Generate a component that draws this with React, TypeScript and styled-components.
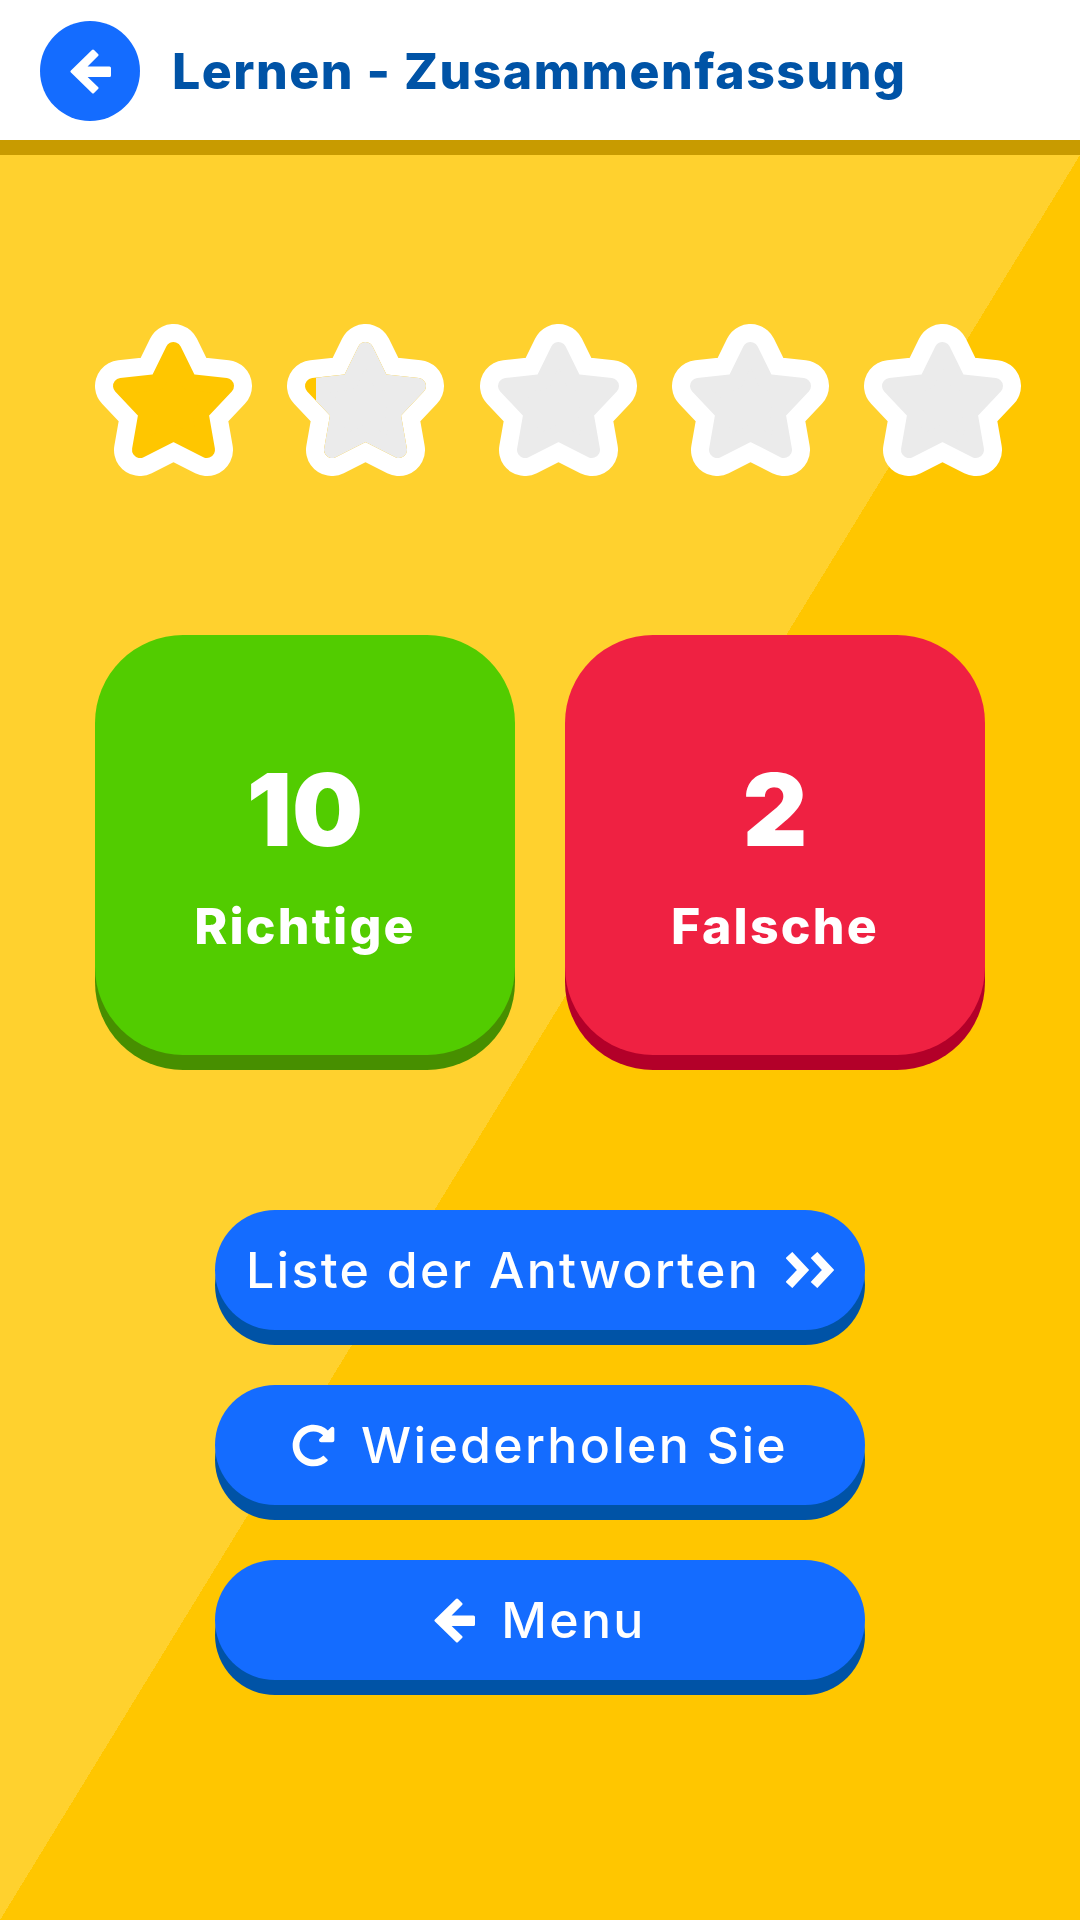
import { createGlobalStyle, styled } from 'styled-components';
import { FaRedoAlt } from 'react-icons/fa';

const GlobalStyle = createGlobalStyle`
  html, body {
    margin: 0;
    padding: 0;
  }

  * {
    box-sizing: border-box;
  }
`;

const Page = styled.div`
  width: 1080px;
  height: 1920px;
  display: flex;
  flex-direction: column;
  overflow: hidden;
  font-family: Inter, "Liberation Sans", sans-serif;
  color: white;
`;

const Header = styled.header`
  height: 155px;
  flex: none;
  display: flex;
  align-items: flex-start;
  gap: 32px;
  padding: 21px 0 0 40px;
  background: white;
  border-bottom: 15px solid #c89b00;
`;

const BackButton = styled.button`
  width: 100px;
  height: 100px;
  flex: none;
  display: flex;
  align-items: center;
  justify-content: center;
  padding: 0;
  border: none;
  border-radius: 50%;
  background: #146cff;
  color: white;
`;

const Title = styled.h1`
  margin: 0;
  line-height: 100px;
  font-size: 50px;
  font-weight: 800;
  letter-spacing: 1.5px;
  color: #0053a6;
  white-space: nowrap;
`;

const Main = styled.main`
  flex: 1;
  display: flex;
  flex-direction: column;
  padding-top: 169px;
  background: linear-gradient(to top left, #ffc600 50%, #ffd12e 50%);
`;

const Stars = styled.div`
  width: 926px;
  margin-left: 95px;
  display: flex;
  justify-content: space-between;
`;

const Cards = styled.section`
  margin-top: 159px;
  padding: 0 95px;
  display: flex;
  gap: 50px;
`;

const Card = styled.div<{ $bg: string; $edge: string }>`
  width: 420px;
  height: 420px;
  display: flex;
  flex-direction: column;
  align-items: center;
  padding-top: 115px;
  border-radius: 88px;
  background: ${(p) => p.$bg};
  box-shadow: 0 15px 0 ${(p) => p.$edge};
`;

const Count = styled.div`
  font-size: 100px;
  line-height: 120px;
  font-weight: 900;
`;

const CardLabel = styled.div`
  margin-top: 26px;
  font-size: 50px;
  line-height: 60px;
  font-weight: 800;
  letter-spacing: 2.2px;
`;

const Actions = styled.nav`
  margin-top: 155px;
  display: flex;
  flex-direction: column;
  align-items: center;
  gap: 55px;
`;

const ActionButton = styled.button`
  width: 650px;
  height: 120px;
  display: flex;
  align-items: center;
  justify-content: center;
  gap: 26px;
  padding: 0;
  border: none;
  border-radius: 60px;
  background: #146cff;
  box-shadow: 0 15px 0 #0053a6;
  color: white;
  font-family: inherit;
  font-size: 50px;
  font-weight: 500;
  letter-spacing: 2.3px;

  svg {
    flex: none;
  }
`;

const ArrowLeft = () => (
  <svg width="41" height="45" viewBox="0 0 41 45">
    <polygon
      points="2,22.5 23,2 27,6 14,19 39.5,19 39.5,26.5 14,26.5 27,39 23,43"
      fill="white"
      stroke="white"
      strokeWidth="3"
      strokeLinejoin="round"
    />
  </svg>
);

const DoubleChevron = () => (
  <svg width="48" height="36" viewBox="0 0 48 36" fill="none" stroke="white" strokeWidth="9">
    <polyline points="3,3 17,18 3,33" />
    <polyline points="28,3 42,18 28,33" />
  </svg>
);

const Star = ({ fill, gray }: { fill: string; gray?: boolean }) => {
  const points = '78.5,26 62.8,58 26,62 51.5,89 45,126 78.5,109 112,126 105.5,89 131,62 94.2,58';
  return (
    <svg width="157" height="152" viewBox="0 0 157 152">
      <polygon points={points} fill="white" stroke="white" strokeWidth="52" strokeLinejoin="round" />
      <polygon points={points} fill={fill} stroke={fill} strokeWidth="16" strokeLinejoin="round" />
      {gray && (
        <>
          <defs>
            <clipPath id="star-cut">
              <rect x="29" y="0" width="128" height="152" />
            </clipPath>
          </defs>
          <polygon
            points={points}
            fill="#ebebeb"
            stroke="#ebebeb"
            strokeWidth="16"
            strokeLinejoin="round"
            clipPath="url(#star-cut)"
          />
        </>
      )}
    </svg>
  );
};

export default function App() {
  return (
    <Page>
      <GlobalStyle />
      <Header>
        <BackButton>
          <ArrowLeft />
        </BackButton>
        <Title>Lernen - Zusammenfassung</Title>
      </Header>
      <Main>
        <Stars>
          <Star fill="#ffc600" />
          <Star fill="#ffc600" gray />
          <Star fill="#ebebeb" />
          <Star fill="#ebebeb" />
          <Star fill="#ebebeb" />
        </Stars>
        <Cards>
          <Card $bg="#52cc00" $edge="#478f00">
            <Count>10</Count>
            <CardLabel>Richtige</CardLabel>
          </Card>
          <Card $bg="#ef2142" $edge="#b30029">
            <Count>2</Count>
            <CardLabel>Falsche</CardLabel>
          </Card>
        </Cards>
        <Actions>
          <ActionButton>
            Liste der Antworten
            <DoubleChevron />
          </ActionButton>
          <ActionButton>
            <FaRedoAlt size={43} />
            Wiederholen Sie
          </ActionButton>
          <ActionButton>
            <ArrowLeft />
            Menu
          </ActionButton>
        </Actions>
      </Main>
    </Page>
  );
}
